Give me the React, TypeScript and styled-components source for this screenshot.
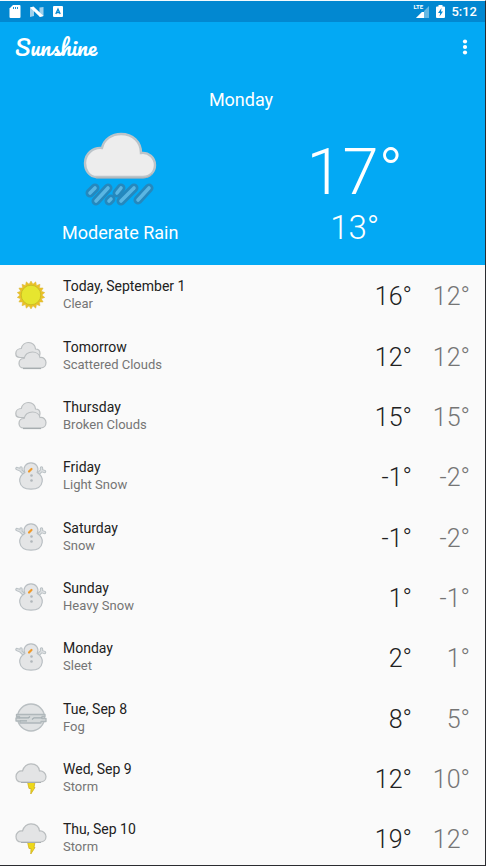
import React from "react";
import styled, { createGlobalStyle } from "styled-components";

const GlobalStyle = createGlobalStyle`
  *, *::before, *::after { box-sizing: border-box; }
  body { margin: 0; background: #fafafa; font-family: Roboto, "Noto Sans", sans-serif; }
  h1, h2, p, ul { margin: 0; padding: 0; }
`;

const Screen = styled.div`
  display: flex;
  flex-direction: column;
  height: 100vh;
  border-top: 1px solid #f4fafd;
  border-right: 1px solid #2b2c30;
  border-bottom: 1px solid #2b2c30;
  background: #fafafa;
`;

const StatusBar = styled.div`
  display: flex;
  flex: none;
  align-items: center;
  justify-content: space-between;
  height: 21px;
  padding: 0 8px 0 9px;
  background: #0288d1;
  color: #fff;
`;

const StatusGroup = styled.div<{ $gap: number }>`
  display: flex;
  align-items: center;
  gap: ${(p) => p.$gap}px;
`;

const Clock = styled.time`
  font-size: 13px;
  font-weight: 500;
  line-height: 21px;
`;

const Toolbar = styled.header`
  display: flex;
  flex: none;
  align-items: center;
  justify-content: space-between;
  height: 50px;
  padding: 0 8px 0 15px;
  background: #03a9f4;
  color: #fff;
`;

const Wordmark = styled.h1`
  font-family: Pacifico, cursive;
  font-size: 22px;
  font-weight: 400;
  line-height: 32px;
`;

const MenuButton = styled.button`
  display: flex;
  align-items: center;
  justify-content: center;
  width: 24px;
  height: 40px;
  padding: 0;
  border: 0;
  background: none;
  color: inherit;
`;

const Today = styled.section`
  flex: none;
  height: 193px;
  padding: 15px 6px 0 3px;
  background: #03a9f4;
  color: #fff;
  text-align: center;
`;

const TodayTitle = styled.h2`
  font-size: 18px;
  font-weight: 400;
  line-height: 26px;
`;

const TodayColumns = styled.div`
  display: grid;
  grid-template-columns: 1fr 1fr;
  padding: 19px 7px 0 0;
`;

const TodayColumn = styled.div`
  display: flex;
  flex-direction: column;
  align-items: center;
`;

const Condition = styled.p`
  padding-top: 15px;
  font-size: 18px;
  line-height: 24px;
`;

const TodayHigh = styled.p`
  padding-top: 4px;
  font-size: 65px;
  font-weight: 300;
  line-height: 72px;
`;

const TodayLow = styled.p`
  font-size: 33px;
  font-weight: 300;
  line-height: 40px;
`;

const Forecast = styled.ul`
  flex: 1;
  min-height: 0;
  overflow-y: auto;
  scrollbar-width: none;
  list-style: none;
`;

const Row = styled.li`
  display: grid;
  grid-template-columns: 32px 1fr 60px 58px;
  align-items: center;
  height: 60px;
  padding: 0 15px;

  &:nth-child(3n + 2) { height: 61px; }
`;

const DayText = styled.div`
  padding-left: 16px;
`;

const Day = styled.p`
  color: #212121;
  font-size: 14px;
  line-height: 18px;
`;

const Summary = styled.p`
  color: #757575;
  font-size: 13px;
  line-height: 18px;
`;

const Temp = styled.span<{ $low?: boolean }>`
  padding-top: 4px;
  color: ${(p) => (p.$low ? "#757575" : "#212121")};
  font-size: 25px;
  font-weight: 300;
  line-height: 32px;
  text-align: right;
`;

const SdCardIcon = () => (
  <svg width="12" height="14" viewBox="0 0 12 14" aria-hidden="true">
    <path d="M4 0h6.500q1 0 1 1v11q0 1-1 1H1.500q-1 0-1-1V3.500z" fill="#fff" />
    <path d="M4.500 2v2M6.500 2v2M8.500 2v2" stroke="#0288d1" strokeWidth=".9" />
  </svg>
);

const NougatIcon = () => (
  <svg width="14" height="12" viewBox="0 0 14 12" aria-hidden="true">
    <path d="M0 1.500L4 1v9l-4 1z M9.500 1.500L13.500 1v9l-4 1z" fill="#9fd0ec" />
    <path d="M0 1.500L3.500 .5 13.500 10 10 11z" fill="#fff" />
  </svg>
);

const KeyboardIcon = () => (
  <svg width="10" height="11" viewBox="0 0 10 11" aria-hidden="true">
    <rect width="10" height="11" rx="1" fill="#fff" />
    <path d="M2.800 8L5 3l2.200 5M3.500 6.500h3" fill="none" stroke="#0288d1" strokeWidth="1.300" />
  </svg>
);

const Signal = styled.div`
  position: relative;
  width: 17px;
  height: 15px;
`;

const SignalLabel = styled.span`
  position: absolute;
  top: 0;
  left: 0;
  font-size: 6px;
  font-weight: 700;
  line-height: 6px;
`;

const SignalIcon = () => (
  <Signal>
    <svg width="17" height="15" viewBox="0 0 17 15" aria-hidden="true">
      <path d="M16 2v12H3l6-6h2V7z" fill="#65b8e3" />
      <path d="M11 8v6H3l6-6z" fill="#fff" />
    </svg>
    <SignalLabel>LTE</SignalLabel>
  </Signal>
);

const BatteryIcon = () => (
  <svg width="9" height="14" viewBox="0 0 9 14" aria-hidden="true">
    <path d="M2.500 0h4v1.500H8q1 0 1 1V12q0 1-1 1H1q-1 0-1-1V2.500q0-1 1-1h1.500z" fill="#fff" />
    <path d="M5.500 3L2 8h2.200L3.500 11.500 7 6.500H5z" fill="#0288d1" />
  </svg>
);

const MoreIcon = () => (
  <svg width="6" height="18" viewBox="0 0 6 18" fill="currentColor" aria-hidden="true">
    <circle cx="3" cy="3.500" r="2.100" />
    <circle cx="3" cy="9" r="2.100" />
    <circle cx="3" cy="14.500" r="2.100" />
  </svg>
);

const RAIN: [number, number, number, number][] = [
  [7, 61, 12, 56],
  [13, 69, 25, 56],
  [26, 69, 28, 67],
  [34, 61, 38, 56],
  [38, 69, 51, 56],
  [55, 68, 66, 56],
];

const RainIcon = () => (
  <svg width="74" height="74" viewBox="0 0 74 74" strokeLinecap="round" aria-hidden="true">
    <path
      d="M14 45C6 45 2 38 2 31c0-9 8-16 17-15C21 7 29 2 38 2c12 0 20 8 20 19 8-1 14 5 14 12 0 7-5 12-12 12z"
      fill="#ededed"
      stroke="#bcc4c9"
      strokeWidth="2.400"
    />
    <path d="M13 46h47q6 0 9-4" fill="none" stroke="#a9aeb2" />
    {RAIN.map(([x1, y1, x2, y2]) => (
      <path key={x1} d={`M${x1} ${y1}L${x2} ${y2}`} stroke="#2588bd" strokeWidth="9" />
    ))}
    {RAIN.map(([x1, y1, x2, y2]) => (
      <path key={x1} d={`M${x1} ${y1}L${x2} ${y2}`} stroke="#5ab6e3" strokeWidth="3.600" />
    ))}
  </svg>
);

const SUN_RAYS = Array.from({ length: 36 }, (_, i) => {
  const radius = i % 2 === 0 ? 14 : 11;
  const angle = (i * Math.PI) / 18;
  return `${(16 + radius * Math.sin(angle)).toFixed(2)},${(16 - radius * Math.cos(angle)).toFixed(2)}`;
}).join(" ");

const SunIcon = () => (
  <>
    <polygon points={SUN_RAYS} fill="#ebc026" stroke="#d8b83b" strokeWidth=".5" />
    <circle cx="16" cy="16" r="9.800" fill="#e6e52f" stroke="#c9bd25" strokeWidth=".9" />
  </>
);

const CloudsIcon = () => (
  <g fill="#e3e4e5" stroke="#b9bdbf" strokeWidth="1.200">
    <path d="M5 17.500C2 17.500 .8 15.500 .8 13.500c0-3 2.500-5 5.500-5C7 5 10 2.500 13.500 2.500c4 0 7 3 7 6.500 3 0 4.500 2 4.500 4.500S23 17.500 20 17.500z" />
    <path d="M8.500 28c-3 0-4.500-2.500-4.500-4.500 0-3 2-5 5-5 1-4 4.500-6.500 8.500-6.500s7 2.500 7.500 5.500c3.500-.5 6 2 6 5s-2 5.500-5 5.500z" />
    <path d="M8 28.500h18" stroke="#a7adb0" />
  </g>
);

const SNOW_ARMS = "M8.500 13L5 9.500M2 8.500l3.500 1.500M6 9.500V8M24 13l2.500-2.500M29.500 11.500l-3-1V8";

const SnowIcon = () => (
  <>
    <g fill="none" strokeLinecap="round" strokeLinejoin="round">
      <path d={SNOW_ARMS} stroke="#b9c0c4" strokeWidth="3.400" />
      <path d={SNOW_ARMS} stroke="#dcdfe1" strokeWidth="1.400" />
    </g>
    <path
      d="M9.800 12.500C7.500 7.500 11 2.800 16 2.800S24.500 7.500 22.200 12.500c3.500 2 5.500 5 5 9C26.500 26.500 22 29.200 16 29.200S5.500 26.500 4.800 21.500C4.300 17.500 6.300 14.500 9.800 12.500z"
      fill="#e4e5e6"
      stroke="#b9bfc3"
      strokeWidth="1.200"
    />
    <path d="M14 11.500l2.500-2.500" stroke="#ef9a2d" strokeWidth="2.200" strokeLinecap="round" />
    <circle cx="16.500" cy="15.500" r="1.300" fill="#b0b6ba" />
    <circle cx="16.500" cy="20.500" r="1.300" fill="#b0b6ba" />
  </>
);

const FogIcon = () => (
  <>
    <circle cx="16" cy="15.500" r="13.500" fill="#e1e3e4" stroke="#b9bfc2" strokeWidth="1.400" />
    <path
      d="M1.500 12.500h28.500v2h-3v2h4v3h-5v1.500H5v-2H1v-3h3.500v-1.500h-3z"
      fill="#d5d9da"
      stroke="#afb7ba"
      strokeWidth="1.300"
      strokeLinejoin="round"
    />
    <path d="M4.500 15.800h9l1.500-1.300M17 17.500l2-1.700h8M5 18.800h7" fill="none" stroke="#a3adb1" strokeWidth="1.200" />
  </>
);

const StormIcon = () => (
  <>
    <path d="M12.500 20h7.500l-1 5.500h1L15.800 32l.2-5.500h-2z" fill="#edd81a" stroke="#cfb025" strokeWidth=".8" />
    <path
      d="M6 20C2.500 20 1 17.500 1 14.500c0-3.500 3-6 6.500-5.500C9 4 12 1.800 16 1.800c5 0 8 3 8.500 7.200 3.500-.5 6.500 2.500 6.500 5.500s-2 5.500-5.500 5.500z"
      fill="#e3e4e5"
      stroke="#b9bdbf"
      strokeWidth="1.200"
    />
    <path d="M6 20.500h20" stroke="#a7adb0" />
  </>
);

const ICONS = {
  sun: SunIcon,
  clouds: CloudsIcon,
  snow: SnowIcon,
  fog: FogIcon,
  storm: StormIcon,
};

type Entry = {
  day: string;
  summary: string;
  icon: keyof typeof ICONS;
  high: number;
  low: number;
};

const FORECAST: Entry[] = [
  { day: "Today, September 1", summary: "Clear", icon: "sun", high: 16, low: 12 },
  { day: "Tomorrow", summary: "Scattered Clouds", icon: "clouds", high: 12, low: 12 },
  { day: "Thursday", summary: "Broken Clouds", icon: "clouds", high: 15, low: 15 },
  { day: "Friday", summary: "Light Snow", icon: "snow", high: -1, low: -2 },
  { day: "Saturday", summary: "Snow", icon: "snow", high: -1, low: -2 },
  { day: "Sunday", summary: "Heavy Snow", icon: "snow", high: 1, low: -1 },
  { day: "Monday", summary: "Sleet", icon: "snow", high: 2, low: 1 },
  { day: "Tue, Sep 8", summary: "Fog", icon: "fog", high: 8, low: 5 },
  { day: "Wed, Sep 9", summary: "Storm", icon: "storm", high: 12, low: 10 },
  { day: "Thu, Sep 10", summary: "Storm", icon: "storm", high: 19, low: 12 },
];

const ForecastRow = ({ day, summary, icon, high, low }: Entry) => {
  const Icon = ICONS[icon];
  return (
    <Row>
      <svg width="32" height="32" viewBox="0 0 32 32" aria-hidden="true">
        <Icon />
      </svg>
      <DayText>
        <Day>{day}</Day>
        <Summary>{summary}</Summary>
      </DayText>
      <Temp>{high}°</Temp>
      <Temp $low>{low}°</Temp>
    </Row>
  );
};

export default function App() {
  return (
    <>
      <GlobalStyle />
      <Screen>
        <StatusBar>
          <StatusGroup $gap={9}>
            <SdCardIcon />
            <NougatIcon />
            <KeyboardIcon />
          </StatusGroup>
          <StatusGroup $gap={6}>
            <SignalIcon />
            <BatteryIcon />
            <Clock>5:12</Clock>
          </StatusGroup>
        </StatusBar>
        <Toolbar>
          <Wordmark>Sunshine</Wordmark>
          <MenuButton type="button" aria-label="More options">
            <MoreIcon />
          </MenuButton>
        </Toolbar>
        <Today>
          <TodayTitle>Monday</TodayTitle>
          <TodayColumns>
            <TodayColumn>
              <RainIcon />
              <Condition>Moderate Rain</Condition>
            </TodayColumn>
            <TodayColumn>
              <TodayHigh>17°</TodayHigh>
              <TodayLow>13°</TodayLow>
            </TodayColumn>
          </TodayColumns>
        </Today>
        <Forecast>
          {FORECAST.map((entry) => (
            <ForecastRow key={entry.day} {...entry} />
          ))}
        </Forecast>
      </Screen>
    </>
  );
}
